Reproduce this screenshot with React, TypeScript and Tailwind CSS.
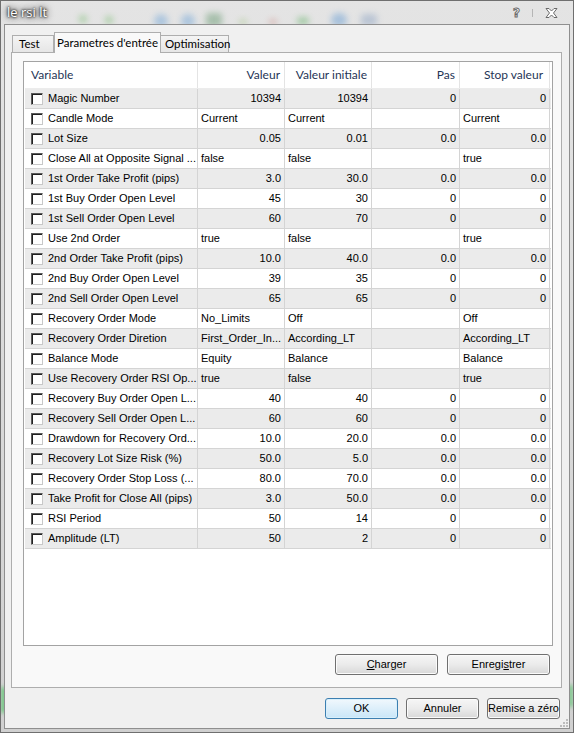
import React from "react";

type Row = {
  name: string;
  vals: [string, string, string, string];
  num: boolean;
};

const rows: Row[] = [
  { name: "Magic Number", vals: ["10394", "10394", "0", "0"], num: true },
  { name: "Candle Mode", vals: ["Current", "Current", "", "Current"], num: false },
  { name: "Lot Size", vals: ["0.05", "0.01", "0.0", "0.0"], num: true },
  { name: "Close All at Opposite Signal ...", vals: ["false", "false", "", "true"], num: false },
  { name: "1st Order Take Profit (pips)", vals: ["3.0", "30.0", "0.0", "0.0"], num: true },
  { name: "1st Buy Order Open Level", vals: ["45", "30", "0", "0"], num: true },
  { name: "1st Sell Order Open Level", vals: ["60", "70", "0", "0"], num: true },
  { name: "Use 2nd Order", vals: ["true", "false", "", "true"], num: false },
  { name: "2nd Order Take Profit (pips)", vals: ["10.0", "40.0", "0.0", "0.0"], num: true },
  { name: "2nd Buy Order Open Level", vals: ["39", "35", "0", "0"], num: true },
  { name: "2nd Sell Order Open Level", vals: ["65", "65", "0", "0"], num: true },
  { name: "Recovery Order Mode", vals: ["No_Limits", "Off", "", "Off"], num: false },
  { name: "Recovery Order Diretion", vals: ["First_Order_In...", "According_LT", "", "According_LT"], num: false },
  { name: "Balance Mode", vals: ["Equity", "Balance", "", "Balance"], num: false },
  { name: "Use Recovery Order RSI Op...", vals: ["true", "false", "", "true"], num: false },
  { name: "Recovery Buy Order Open L...", vals: ["40", "40", "0", "0"], num: true },
  { name: "Recovery Sell Order Open L...", vals: ["60", "60", "0", "0"], num: true },
  { name: "Drawdown for Recovery Ord...", vals: ["10.0", "20.0", "0.0", "0.0"], num: true },
  { name: "Recovery Lot Size Risk (%)", vals: ["50.0", "5.0", "0.0", "0.0"], num: true },
  { name: "Recovery Order Stop Loss (...", vals: ["80.0", "70.0", "0.0", "0.0"], num: true },
  { name: "Take Profit for Close All (pips)", vals: ["3.0", "50.0", "0.0", "0.0"], num: true },
  { name: "RSI Period", vals: ["50", "14", "0", "0"], num: true },
  { name: "Amplitude (LT)", vals: ["50", "2", "0", "0"], num: true },
];

const cols = "grid grid-cols-[173px_87px_87px_88px_90px]";
const uiFont = "font-['Lato',sans-serif]";
const cellFont = "font-['Liberation_Sans',Arial,sans-serif] text-[11px] text-black";

function Btn({ children, wide, primary }: { children: React.ReactNode; wide?: boolean; primary?: boolean }) {
  return (
    <button
      className={
        (wide ? "w-[103px] " : "w-[73px] ") +
        "h-[21px] rounded-[3px] border flex items-center justify-center leading-none " +
        cellFont +
        (primary
          ? " border-[#3c7fb1] bg-gradient-to-b from-[#f1f8fd] to-[#c9e6f8] shadow-[inset_0_0_0_1px_#d8effb]"
          : " border-[#707070] bg-gradient-to-b from-[#f6f6f6] via-[#ebebeb] to-[#d8d8d8] shadow-[inset_0_0_0_1px_#fbfbfb]")
      }
    >
      {children}
    </button>
  );
}

function Check() {
  return (
    <span className="w-[12px] h-[12px] shrink-0 bg-white border border-t-[#5a5a5a] border-l-[#5a5a5a] border-r-[#c8c8c8] border-b-[#c8c8c8] shadow-[inset_1px_1px_0_#202020]" />
  );
}

export default function App() {
  return (
    <div className="w-[574px] h-[733px] bg-[#cfcfcf]">
      <div className="relative w-full h-full flex flex-col border border-[#6f6f6f] bg-gradient-to-b from-[#e4e4e4] via-[#dadada] to-[#d0d0d0] px-[3px] pb-[3px] overflow-hidden">
        {/* glass background blur */}
        <div className="absolute left-[78px] top-[14px] w-[8px] h-[8px] rounded-full bg-[#58b04c] opacity-40 blur-[3px]" />
        <div className="absolute left-[104px] top-[15px] w-[8px] h-[8px] rounded-full bg-[#58b04c] opacity-40 blur-[3px]" />
        <div className="absolute left-[153px] top-[13px] w-[14px] h-[14px] rounded-full bg-[#5c9ad6] opacity-40 blur-[3px]" />
        <div className="absolute left-[180px] top-[13px] w-[14px] h-[14px] rounded-full bg-[#5c9ad6] opacity-40 blur-[3px]" />
        <div className="absolute left-[205px] top-[12px] w-[16px] h-[14px] rounded-[3px] bg-[#4e8a5a] opacity-40 blur-[3px]" />
        <div className="absolute left-[238px] top-[18px] w-[8px] h-[6px] rounded-full bg-[#7ab24a] opacity-30 blur-[3px]" />
        <div className="absolute left-[268px] top-[18px] w-[8px] h-[6px] rounded-full bg-[#c05a50] opacity-30 blur-[3px]" />
        <div className="absolute left-[296px] top-[16px] w-[12px] h-[8px] rounded-full bg-[#45a64a] opacity-40 blur-[3px]" />
        <div className="absolute left-[330px] top-[12px] w-[16px] h-[14px] rounded-full bg-[#4f8fd0] opacity-40 blur-[3px]" />
        <div className="absolute left-[360px] top-[13px] w-[16px] h-[12px] rounded-[3px] bg-[#6f8db8] opacity-35 blur-[3px]" />
        <div className="absolute left-0 top-[686px] w-[5px] h-[26px] bg-[#3fbf57] opacity-70 blur-[2px]" />
        <div className="absolute right-0 top-[684px] w-[5px] h-[22px] bg-[#3fbf57] opacity-60 blur-[2px]" />

        {/* title bar */}
        <div className="relative h-[23px] flex items-center justify-between pl-[3px] pr-[12px]">
          <span className="relative font-['Open_Sans',sans-serif] text-[13px] text-white [text-shadow:0_0_2px_#111,0_0_3px_#222,0_0_6px_#444,0_0_9px_#666]">
            le rsi lt
          </span>
          <div className="flex items-center gap-[12px] pt-[1px]">
            <span className="font-['DejaVu_Sans',sans-serif] font-bold text-[12px] leading-none text-white [-webkit-text-stroke:1px_#6a6a6a]">?</span>
            <span className="w-px h-[8px] bg-[#b5b5b5]" />
            <svg width="13" height="10" viewBox="0 0 13 10">
              <path
                d="M1 0.5 L4 0.5 L6.5 3 L9 0.5 L12 0.5 L8.5 5 L12 9.5 L9 9.5 L6.5 7 L4 9.5 L1 9.5 L4.5 5 Z"
                fill="#fff"
                stroke="#6a6a6a"
                strokeWidth="1"
              />
            </svg>
          </div>
        </div>

        {/* client area */}
        <div className="relative flex-1 flex flex-col border border-[#8f8f8f] bg-[#f0f0f0] pt-[7px] pl-[6px] pr-[7px] pb-[9px]">
          {/* tabs */}
          <div className={"flex items-end h-[20px] pl-[1px] whitespace-nowrap " + uiFont + " text-[11.5px] text-black"}>
            <div className="w-[42px] h-[17px] border border-b-0 border-[#aeaeae] bg-gradient-to-b from-[#f4f4f4] to-[#e6e6e6] flex items-center pl-[6px]">Test</div>
            <div className="relative z-10 -mb-px w-[107px] h-[21px] border border-b-0 border-[#aeaeae] bg-[#f9f9f9] flex items-start justify-center pt-[1px]">Parametres d&apos;entrée</div>
            <div className="w-[68px] h-[17px] border border-l-0 border-b-0 border-[#aeaeae] bg-gradient-to-b from-[#f4f4f4] to-[#e6e6e6] flex items-center pl-[4px]">Optimisation</div>
          </div>

          {/* tab panel */}
          <div className="flex-1 flex flex-col border border-[#aeaeae] bg-[#f9f9f9] pt-[8px] pl-[11px] pr-[8px] pb-[12px]">
            <div className="flex-1 border border-[#a3a3a3] bg-white p-px pt-0 flex flex-col">
              {/* header */}
              <div className={cols + " h-[27px] border-b border-[#ececec] " + uiFont + " text-[12px] text-[#1f3556]"}>
                <div className="flex items-center pl-[6px] border-r border-[#e4e4e4]">Variable</div>
                <div className="flex items-center justify-end pr-[4px] border-r border-[#e4e4e4]">Valeur</div>
                <div className="flex items-center justify-end pr-[4px] border-r border-[#e4e4e4]">Valeur initiale</div>
                <div className="flex items-center justify-end pr-[4px] border-r border-[#e4e4e4]">Pas</div>
                <div className="flex items-center justify-end pr-[6px] border-r border-[#e4e4e4]">Stop valeur</div>
              </div>
              {/* rows */}
              {rows.map((r, i) => (
                <div
                  key={r.name}
                  className={cols + " h-[20px] border-b border-[#d4d4d4] " + cellFont + (i % 2 === 0 ? " bg-[#ebebeb]" : " bg-white")}
                >
                  <div className="flex items-center pl-[6px] gap-[5px] border-r border-[#d4d4d4] whitespace-nowrap overflow-hidden">
                    <Check />
                    <span>{r.name}</span>
                  </div>
                  {r.vals.map((v, j) => (
                    <div
                      key={j}
                      className={
                        "flex items-center border-r border-[#d4d4d4] whitespace-nowrap overflow-hidden " +
                        (r.num ? "justify-end pr-[3px]" : "justify-start pl-[3px]")
                      }
                    >
                      {v}
                    </div>
                  ))}
                </div>
              ))}
            </div>
            <div className="flex justify-end gap-[9px] mt-[8px] pr-[3px]">
              <Btn wide>
                <span className="underline">C</span>harger
              </Btn>
              <Btn wide>
                Enregi<span className="underline">s</span>trer
              </Btn>
            </div>
          </div>

          {/* dialog buttons */}
          <div className="flex justify-end gap-[8px] mt-[10px] pr-[2px]">
            <Btn primary>OK</Btn>
            <Btn>Annuler</Btn>
            <Btn>Remise a zéro</Btn>
          </div>

          {/* size grip */}
          <div className="absolute right-[1px] bottom-[1px] grid grid-cols-3 gap-[1px]">
            <span />
            <span />
            <span className="w-[2px] h-[2px] bg-[#bdbdbd]" />
            <span />
            <span className="w-[2px] h-[2px] bg-[#bdbdbd]" />
            <span className="w-[2px] h-[2px] bg-[#bdbdbd]" />
            <span className="w-[2px] h-[2px] bg-[#bdbdbd]" />
            <span className="w-[2px] h-[2px] bg-[#bdbdbd]" />
            <span className="w-[2px] h-[2px] bg-[#bdbdbd]" />
          </div>
        </div>
      </div>
    </div>
  );
}
